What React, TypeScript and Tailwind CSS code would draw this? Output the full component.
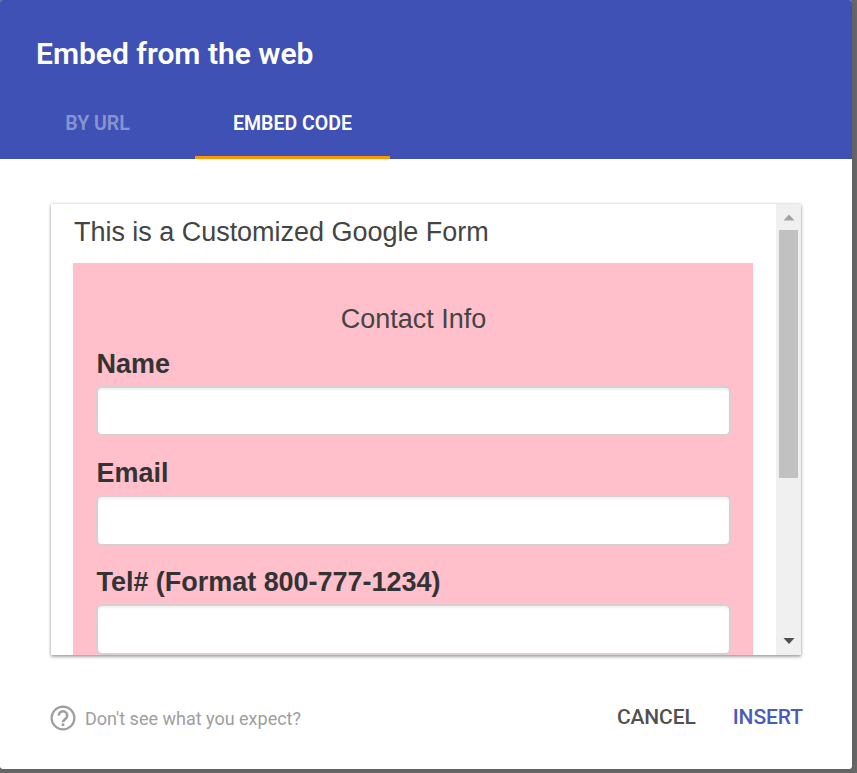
import React, { useState } from 'react';

interface FormFieldProps {
  label: string;
  value: string;
  onChange: (value: string) => void;
}

const FormField: React.FC<FormFieldProps> = ({ label, value, onChange }) => (
  <label className="block mb-[18.7px]">
    <span className="block h-[33px] mb-[7px] pl-[0.5px] text-[27px] leading-[36px] font-bold tracking-[-0.03px] whitespace-nowrap">
      {label}
    </span>
    <input
      type="text"
      value={value}
      onChange={e => onChange(e.target.value)}
      className="block w-full h-[50.7px] px-5 text-2xl bg-white border-2 border-[#d8cfd1] rounded-md shadow-[inset_0_2px_2px_rgba(0,0,0,0.06)] outline-none"
    />
  </label>
);

const ScrollBar: React.FC = () => (
  <div className="flex flex-col items-center justify-between w-[25px] shrink-0 bg-[#f0f0f0]">
    <div className="flex flex-col items-center">
      <svg className="w-3 h-[26px]" viewBox="0 0 12 26">
        <path d="M0.5 16.5 L6 10.5 L11.5 16.5Z" fill="#a3a3a3" />
      </svg>
      <div className="w-[19px] h-[248px] bg-[#c1c1c1]" />
    </div>
    <svg className="w-3 h-[26px]" viewBox="0 0 12 26">
      <path d="M0.5 9 L6 15 L11.5 9Z" fill="#505050" />
    </svg>
  </div>
);

const App: React.FC = () => {
  const [activeTab, setActiveTab] = useState('code');
  const [formData, setFormData] = useState({ name: '', email: '', tel: '' });

  return (
    <div className="w-[857px] h-[773px] overflow-hidden bg-[#696969] font-['Roboto',sans-serif]">
      <div className="flex flex-col w-[852.4px] h-[769.4px] bg-white rounded-[3px] overflow-hidden shadow-[0_0_8px_rgba(0,0,0,0.15)]">
        {/* Header */}
        <header className="flex flex-col h-[158.5px] shrink-0 bg-[#3f51b5] text-white">
          <h1 className="h-[91px] pl-9 pt-[36px] text-[30px] leading-[36px] font-semibold whitespace-nowrap">
            Embed from the web
          </h1>
          <nav className="flex flex-1 text-[19.5px] font-semibold">
            <button
              type="button"
              onClick={() => setActiveTab('url')}
              className={`w-[195px] border-b-[3px] ${activeTab === 'url' ? 'border-[#ff9800]' : 'border-transparent text-white/40'}`}
            >
              BY URL
            </button>
            <button
              type="button"
              onClick={() => setActiveTab('code')}
              className={`w-[195px] border-b-[3px] ${activeTab === 'code' ? 'border-[#ff9800]' : 'border-transparent text-white/40'}`}
            >
              EMBED CODE
            </button>
          </nav>
        </header>

        {/* Preview */}
        <main className="px-[51px] pt-[45.5px]">
          <div className="flex w-[750px] h-[451px] overflow-hidden bg-white shadow-[0_0_3px_rgba(0,0,0,0.2),0_2px_3px_rgba(0,0,0,0.3)] font-['Liberation_Sans',Arial,sans-serif] text-[#333]">
            <div className="flex-1 min-w-0 overflow-hidden pl-[22px] pr-[23px]">
              <h2 className="h-[58.5px] pt-[10px] pl-px text-[27px] leading-[36px] tracking-[-0.03px] text-[#444] whitespace-nowrap">
                This is a Customized Google Form
              </h2>
              <form className="pl-[23px] pr-[22px] pt-[38px] bg-[#ffc0cb]">
                <p className="h-[45px] text-[27px] leading-[37px] text-center text-[#444]">
                  Contact Info
                </p>
                <FormField
                  label="Name"
                  value={formData.name}
                  onChange={name => setFormData(prev => ({ ...prev, name }))}
                />
                <FormField
                  label="Email"
                  value={formData.email}
                  onChange={email => setFormData(prev => ({ ...prev, email }))}
                />
                <FormField
                  label="Tel# (Format 800-777-1234)"
                  value={formData.tel}
                  onChange={tel => setFormData(prev => ({ ...prev, tel }))}
                />
              </form>
            </div>
            <ScrollBar />
          </div>
        </main>

        {/* Footer */}
        <footer className="flex items-center justify-between h-[46px] mt-[40px] pl-[50px] pr-[49.5px]">
          <a className="flex items-center gap-[9px] text-[18px] text-[#9e9e9e] whitespace-nowrap">
            <svg className="w-[26px] h-[26px]" viewBox="0 0 26 26" fill="none" stroke="currentColor" strokeWidth="2.2">
              <circle cx="13" cy="13" r="11.4" />
              <path d="M8.8 10.6a4.2 4.2 0 1 1 7 3c-1.6 1.4-2.8 1.8-2.8 3.6" strokeWidth="2.6" />
              <path d="M13 18.4v2.6" strokeWidth="2.6" />
            </svg>
            <span>Don't see what you expect?</span>
          </a>
          <div className="flex gap-[37px] text-[21px] font-medium tracking-[-0.1px]">
            <button type="button" className="text-[#505050]">CANCEL</button>
            <button type="button" className="text-[#4a5bb9]">INSERT</button>
          </div>
        </footer>
      </div>
    </div>
  );
};

export default App;
